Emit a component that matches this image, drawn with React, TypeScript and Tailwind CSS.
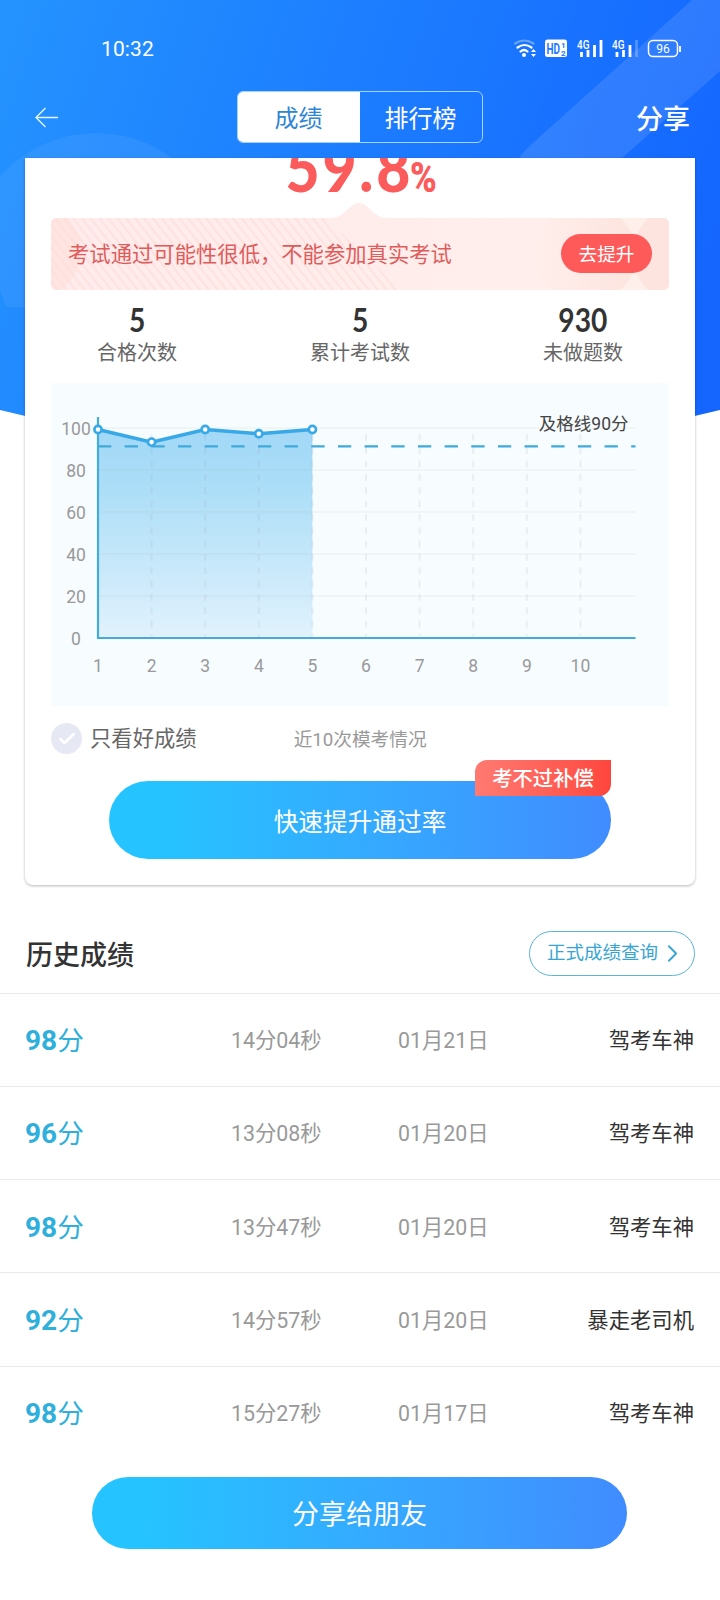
import { Check, ChevronRight } from 'lucide-react';

type HistoryItem = {
    score: number;
    duration: string;
    date: string;
    level: string;
};

const history: HistoryItem[] = [
    { score: 98, duration: '14分04秒', date: '01月21日', level: '驾考车神' },
    { score: 96, duration: '13分08秒', date: '01月20日', level: '驾考车神' },
    { score: 98, duration: '13分47秒', date: '01月20日', level: '驾考车神' },
    { score: 92, duration: '14分57秒', date: '01月20日', level: '暴走老司机' },
    { score: 98, duration: '15分27秒', date: '01月17日', level: '驾考车神' },
];

const stats = [
    { value: '5', label: '合格次数' },
    { value: '5', label: '累计考试数' },
    { value: '930', label: '未做题数' },
];

const scores = [98, 92, 98, 96, 98];

// Chart geometry, relative to the 618x323 panel
const LEFT = 47;
const RIGHT = 584.5;
const BOTTOM = 255;
const STEP = 53.6;

const px = (i: number) => LEFT + i * STEP;
const py = (v: number) => BOTTOM - 2.7 - v * 2.1;

function Backdrop() {
    return (
        <svg className="absolute inset-x-0 top-0 -z-10" width="720" height="440" viewBox="0 0 720 440" fill="none">
            <defs>
                <linearGradient id="sky" gradientUnits="userSpaceOnUse" x1="0" y1="60" x2="700" y2="300">
                    <stop stopColor="#2492ff" />
                    <stop offset="1" stopColor="#1466ff" />
                </linearGradient>
                <clipPath id="skyClip">
                    <path d="M0 0H720V410Q360 500 0 410Z" />
                </clipPath>
            </defs>
            <g clipPath="url(#skyClip)">
                <rect width="720" height="440" fill="url(#sky)" />
                <path d="M0 176C50 122 125 122 172 158H200V307H6L0 290Z" fill="#fff" fillOpacity=".06" />
                <path d="M692 0H720V71L622 158H519Q524 151 534 142Z" fill="#fff" fillOpacity=".11" />
            </g>
        </svg>
    );
}

function StatusBar() {
    return (
        <div className="flex h-[91px] items-start justify-between pt-[35px] pr-[39px] pl-[101px]">
            <span className="pt-px text-[21px] leading-[27px] tracking-[0.1px]">10:32</span>
            <svg className="mt-[3px]" width="168" height="22" viewBox="513 38 168 22" fill="none">
                {/* wifi */}
                <g stroke="#fff" strokeWidth="2.200" strokeLinecap="round">
                    <path d="M515 43.500Q524.500 37.500 533.500 43.500" opacity=".35" />
                    <path d="M517.500 47.500Q524.500 42.500 531.500 47.500" />
                    <path d="M520.500 51.500Q524 48.500 527.500 51.500" />
                </g>
                <circle cx="524" cy="55" r="2" fill="#fff" />
                <path d="M531 52l2.500-3 2.500 3zM531 54l2.500 3 2.500-3z" fill="#fff" />
                {/* hd */}
                <rect x="545" y="39.500" width="22" height="17.500" rx="2.500" fill="#fff" />
                <text x="546.500" y="53.500" fontSize="14" fontWeight="700" fill="#1c78ff" textLength="13.500" lengthAdjust="spacingAndGlyphs">HD</text>
                <text x="561" y="47.500" fontSize="8" fontWeight="700" fill="#1c78ff">1</text>
                <text x="561" y="55.500" fontSize="8" fontWeight="700" fill="#1c78ff">2</text>
                {/* signal */}
                <text x="577" y="48.500" fontSize="12" fontWeight="500" fill="#fff" textLength="12.500" lengthAdjust="spacingAndGlyphs">4G</text>
                <path d="M581.500 52v5M588 50v7M594.500 45v12M601 40v17" stroke="#fff" strokeWidth="2.800" />
                <text x="612" y="48.500" fontSize="12" fontWeight="500" fill="#fff" textLength="12.500" lengthAdjust="spacingAndGlyphs">4G</text>
                <path d="M617 52v5M623.500 50v7M630 45v12" stroke="#fff" strokeWidth="2.800" />
                <path d="M636.500 40v17" stroke="#fff" strokeOpacity=".25" strokeWidth="2.800" />
                {/* battery */}
                <rect x="648.500" y="40.500" width="29" height="16" rx="4.500" stroke="#fff" strokeWidth="1.500" />
                <path d="M680 46v6" stroke="#fff" strokeWidth="1.800" />
                <text x="663" y="52.500" fontSize="12" fill="#fff" textAnchor="middle">96</text>
            </svg>
        </div>
    );
}

function NavBar() {
    return (
        <div className="flex h-[67px] items-start justify-between pr-[30px] pl-[34px]">
            <svg className="mt-[15px] mr-[25px]" width="24" height="22" viewBox="0 0 24 22" fill="none" stroke="#e8f6ff" strokeWidth="1.300">
                <path d="M24 11.500H2M11.500 2L2 11.500L11.500 21" />
            </svg>
            <div className="flex h-[52px] w-[246px] overflow-hidden rounded-md border border-[#a5d3ff] text-2xl">
                <div className="flex flex-1 items-center justify-center bg-white pt-[3px] text-[#2f86d6]">成绩</div>
                <div className="flex flex-1 items-center justify-center pt-[3px]">排行榜</div>
            </div>
            <span className="mt-[10px] text-[27px] leading-[39px] font-medium">分享</span>
        </div>
    );
}

function Banner() {
    return (
        <div className="relative flex h-[87px] items-end">
            <svg className="absolute inset-0" width="618" height="87" viewBox="0 0 618 87" fill="none">
                <defs>
                    <clipPath id="bannerClip">
                        <path d="M6 15H281C290 15 296 6 302 2Q308 -2 314 2C320 6 326 15 335 15H612Q618 15 618 21V81Q618 87 612 87H6Q0 87 0 81V21Q0 15 6 15Z" />
                    </clipPath>
                    <pattern id="stripes" width="7" height="8" patternUnits="userSpaceOnUse" patternTransform="rotate(-38)">
                        <rect width="1.800" height="8" fill="#fde1df" />
                    </pattern>
                    <linearGradient id="pink" x1="0" x2="1">
                        <stop stopColor="#ffebeb" />
                        <stop offset="1" stopColor="#ffefeb" />
                    </linearGradient>
                    <linearGradient id="blob" x1="0" x2="1">
                        <stop stopColor="#fee4df" stopOpacity="0" />
                        <stop offset="1" stopColor="#fde4de" />
                    </linearGradient>
                </defs>
                <g clipPath="url(#bannerClip)">
                    <rect width="618" height="87" fill="url(#pink)" />
                    <path d="M0 15H275L350 87H0Z" fill="url(#stripes)" />
                    <circle cx="-18" cy="48" r="48" fill="#ffdcd6" fillOpacity=".45" />
                    <circle cx="535" cy="51" r="50" fill="url(#blob)" />
                    <circle cx="632" cy="51" r="50" fill="#fde4de" />
                </g>
            </svg>
            <div className="relative flex h-[72px] flex-1 items-center justify-between pr-[17px] pb-px pl-[17px]">
                <span className="pt-[3px] text-[21.330px] text-[#de5c5c]">考试通过可能性很低，不能参加真实考试</span>
                <button className="h-[39px] w-[91px] rounded-full bg-[#ff5a5a] pt-[3px] text-[18.700px] text-white">去提升</button>
            </div>
        </div>
    );
}

function ScoreChart() {
    const line = scores.map((s, i) => `${px(i)},${py(s)}`).join(' ');
    const last = px(scores.length - 1);

    return (
        <svg className="block bg-[#f7fcff]" width="618" height="323" viewBox="0 0 618 323" fontSize="17.500" fill="#999">
            <defs>
                <linearGradient id="area" x1="0" y1="0" x2="0" y2="1">
                    <stop stopColor="#a2d8f7" />
                    <stop offset=".25" stopColor="#aaddf7" />
                    <stop offset="1" stopColor="#e1f2fd" />
                </linearGradient>
            </defs>
            <polygon points={`${LEFT},${BOTTOM} ${line} ${last},${BOTTOM}`} fill="url(#area)" />
            {[0, 20, 40, 60, 80, 100].map((v) => (
                <g key={v}>
                    {v > 0 && (
                        <path d={`M${LEFT} ${BOTTOM - v * 2.1}H${RIGHT}`} stroke="#9aa" strokeOpacity=".1" strokeWidth="1.300" />
                    )}
                    <text x="25" y={BOTTOM - v * 2.1 + 6.5} textAnchor="middle">{v}</text>
                </g>
            ))}
            {Array.from({ length: 10 }, (_, i) => (
                <g key={i}>
                    {i > 0 && (
                        <path d={`M${px(i)} 51V${BOTTOM}`} stroke="#889" strokeOpacity=".12" strokeWidth="2" strokeDasharray="6.670 6.670" />
                    )}
                    <text x={px(i)} y="289" textAnchor="middle">{i + 1}</text>
                </g>
            ))}
            <path d={`M${LEFT} ${py(90)}H${RIGHT}`} stroke="#3fa9dc" strokeWidth="2.300" strokeDasharray="13.330 13.330" />
            <path d={`M${LEFT} 34V${BOTTOM}H${RIGHT}`} fill="none" stroke="#45abd9" strokeWidth="2.200" />
            <polyline points={line} fill="none" stroke="#37a9e6" strokeWidth="3.500" />
            {scores.map((s, i) => (
                <circle key={i} cx={px(i)} cy={py(s)} r="3.600" fill="#fff" stroke="#37a9e6" strokeWidth="2.600" />
            ))}
            <text x="577.500" y="47" textAnchor="end" fill="#444" fontSize="17.500">及格线90分</text>
        </svg>
    );
}

function ResultCard() {
    return (
        <div className="mx-auto h-[727px] w-[670px] overflow-hidden rounded-b-lg bg-white px-[26px] shadow-[0_1px_3px_rgba(0,0,0,0.28)]">
            {/* Scrolled half way under the nav bar */}
            <div className="flex h-[45px] items-end justify-center text-[#fc5b5b]">
                <span className="mr-[-9px] mb-[3px] scale-x-[0.92] font-['Lato'] text-[64px] leading-[64px] font-black tracking-[3px]">59.8</span>
                <span className="mb-[4px] w-[30px] origin-left scale-x-[0.84] text-[43px] leading-[43px] font-black">%</span>
            </div>
            <Banner />
            <div className="flex justify-between pt-[8px]">
                {stats.map(({ value, label }) => (
                    <div key={label} className="flex w-[172px] flex-col items-center">
                        <span className="scale-x-[0.88] font-['Lato'] text-[32px] leading-[44px] font-bold text-[#333]">{value}</span>
                        <span className="mt-px text-xl leading-5 text-[#666]">{label}</span>
                    </div>
                ))}
            </div>
            <div className="mt-[20px]">
                <ScoreChart />
            </div>
            <div className="mt-[17px] flex h-[31px] items-center">
                <span className="flex size-[31px] items-center justify-center rounded-full bg-[#e6e8f4] text-white">
                    <Check className="size-5" strokeWidth={3} />
                </span>
                <span className="ml-[8px] pt-px text-[21.330px] text-[#666]">只看好成绩</span>
                <span className="ml-[97px] pt-[3px] text-[18.670px] text-[#999]">近10次模考情况</span>
            </div>
            <div className="relative mx-auto mt-[27px] h-[78px] w-[502px]">
                <button className="size-full rounded-full bg-linear-to-r from-[#25c3ff] from-10% to-[#408cff] pt-[4px] text-[24.670px] text-white">
                    快速提升通过率
                </button>
                <span className="absolute -top-[21px] right-0 flex h-[36px] w-[136px] items-center justify-center rounded-tl-xl rounded-br-xl bg-linear-to-r from-[#ff7a72] to-[#ff453d] pt-[2px] text-[20.300px] font-medium text-white">
                    考不过补偿
                </span>
            </div>
        </div>
    );
}

export default function App() {
    return (
        <div className="relative isolate h-[1600px] w-[720px] overflow-hidden bg-white font-['Roboto','Noto_Sans_CJK_SC',sans-serif]">
            <Backdrop />
            <header className="text-white">
                <StatusBar />
                <NavBar />
            </header>

            <ResultCard />

            {/* History */}
            <div className="flex h-[107.500px] items-center justify-between pt-[29px] pr-[25px] pl-[26px]">
                <h2 className="pt-[6px] text-[27px] font-medium text-[#333]">历史成绩</h2>
                <button className="flex h-[45px] w-[166px] items-center justify-center rounded-full border border-[#5bb5d6] pl-[2px] text-[18.500px] text-[#36a5d3]">
                    <span className="pt-[2px]">正式成绩查询</span>
                    <ChevronRight className="-mr-2 size-[29px]" strokeWidth={1.5} />
                </button>
            </div>
            <ul>
                {history.map((item, i) => (
                    <li key={i} className="flex h-[93.300px] items-center border-t border-[#e9e9e9] px-[25px] pt-[3px] text-[21.330px] text-[#999]">
                        <span className="w-[206px] text-[26.670px] text-[#2fafdb]">
                            <b className="text-[28px]">{item.score}</b>分
                        </span>
                        <span className="w-[167px]">{item.duration}</span>
                        <span>{item.date}</span>
                        <span className="mr-px ml-auto text-[#333]">{item.level}</span>
                    </li>
                ))}
            </ul>
            <div className="mt-[18.500px] flex justify-center">
                <button className="mr-px h-[72px] w-[535px] rounded-full bg-linear-to-r from-[#25c3ff] from-10% to-[#408cff] pt-[3px] text-[27px] text-white">
                    分享给朋友
                </button>
            </div>
        </div>
    );
}
